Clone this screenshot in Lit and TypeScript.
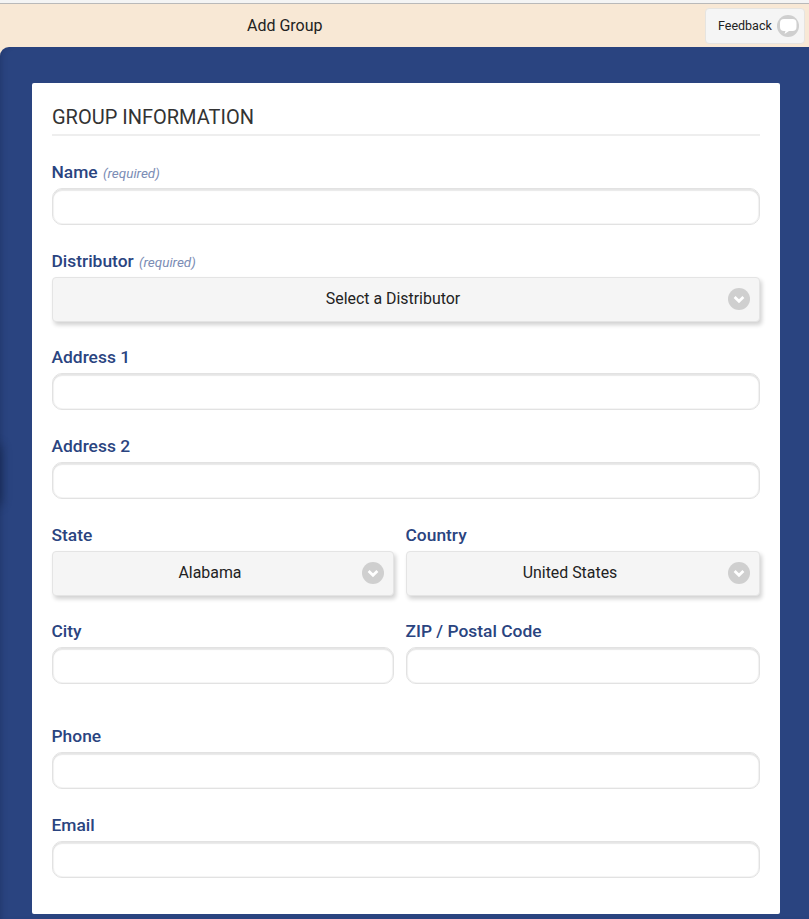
import { LitElement, html, css } from "lit";
import { customElement } from "lit/decorators.js";

const chevron = html`<svg class="chev" width="22" height="22" viewBox="0 0 22 22" aria-hidden="true"><circle cx="11" cy="11" r="11" fill="#cfcfcf"/><path d="M6.6 9 11 13.200l4.400-4.200" fill="none" stroke="#fff" stroke-width="2.800"/></svg>`;

@customElement("app-root")
export class AppRoot extends LitElement {
  static styles = css`
    :host { display: block; height: 919px; overflow: hidden; background: #f8e8d5; font-family: Roboto, "Liberation Sans", sans-serif; color: #222; }
    .topline { height: 3px; background: #f4f4f4; border-bottom: 1px solid #b9b9b9; }
    .header { height: 43px; display: flex; align-items: center; position: relative; padding-right: 4px; box-sizing: border-box; justify-content: flex-end; }
    .title { position: absolute; left: 247px; top: 12px; font-size: 16px; line-height: 20px; color: #222; }
    .feedback { width: 100px; height: 36px; box-sizing: border-box; border: 1px solid #e6e4e0; border-radius: 4px; background: #f5f5f5; display: flex; align-items: center; padding-left: 12px; gap: 5px; font-size: 12.5px; color: #222; }
    .panel { position: relative; height: 872px; background: #2a4480; border-radius: 9px 0 0 0; padding: 36px 29px 0 32px; box-sizing: border-box; box-shadow: inset 5px 0 6px -4px rgba(15,25,60,.3); overflow: hidden; }
    .handle { position: absolute; left: -8px; top: 398px; width: 8px; height: 60px; background: #0c1a3c; opacity: .8; filter: blur(6px); border-radius: 4px; }
    .card { background: #fff; height: 831px; border-radius: 2px; padding: 20px 20px 0; box-sizing: border-box; }
    h2 { margin: 0 0 26px; height: 33px; box-sizing: border-box; border-bottom: 2px solid #eee; font-weight: 400; font-size: 20px; line-height: 29px; color: #333; }
    .field { margin-bottom: 26px; min-width: 0; }
    .tight { margin-bottom: 25px; }
    label { display: block; height: 20px; margin-bottom: 6px; margin-left: -0.5px; font-size: 17.4px; line-height: 20px; font-weight: 500; color: #2a4480; white-space: nowrap; }
    em { font-size: 13.5px; font-weight: 400; color: #7b8db5; margin-left: 1px; }
    .row { display: grid; grid-template-columns: 342px 354px; gap: 12px; }
    .input { height: 37px; box-sizing: border-box; border: 1px solid #e2e2e2; border-radius: 10px; background: #fff; box-shadow: inset 0 2px 1px rgba(0,0,0,.09), inset 1px 0 1px rgba(0,0,0,.05), inset -1px 0 1px rgba(0,0,0,.05), inset 0 -1px 0 rgba(0,0,0,.03); }
    .select { height: 45px; box-sizing: border-box; border: 1px solid #e4e4e4; border-radius: 4px; background: #f5f5f5; box-shadow: 2px 3px 4px rgba(0,0,0,.18); display: flex; align-items: center; justify-content: center; position: relative; font-size: 15.9px; color: #222; padding: 0 26px 2px 0; }
    .chev { position: absolute; right: 9px; top: 10px; }
    .far { margin-bottom: 42px; }
    .bubble { flex: none; }
  `;

  private field(name: string, req = false, cls = "") {
    return html`<div class="field ${cls}"><label>${name}${req ? html` <em>(required)</em>` : ""}</label><div class="input"></div></div>`;
  }
  private select(name: string, value: string, req = false) {
    return html`<div class="field tight"><label>${name}${req ? html` <em>(required)</em>` : ""}</label><div class="select">${value}${chevron}</div></div>`;
  }

  render() {
    return html`
      <div class="topline"></div>
      <div class="header">
        <div class="title">Add Group</div>
        <div class="feedback">Feedback
          <svg class="bubble" width="22" height="22" viewBox="0 0 22 22" aria-hidden="true"><circle cx="11" cy="11" r="11" fill="#cfcfcf"/><path d="M7 4h8.500a4 4 0 0 1 4 4v4a4 4 0 0 1-4 4H12l-4.500 3 1-3H7a4 4 0 0 1-4-4V8a4 4 0 0 1 4-4z" fill="#fff"/></svg>
        </div>
      </div>
      <div class="panel">
        <div class="handle"></div>
        <div class="card">
          <h2>GROUP INFORMATION</h2>
          ${this.field("Name", true)}
          ${this.select("Distributor", "Select a Distributor", true)}
          ${this.field("Address 1")}
          ${this.field("Address 2")}
          <div class="row">
            ${this.select("State", "Alabama")}
            ${this.select("Country", "United States")}
          </div>
          <div class="row">
            ${this.field("City", false, "far")}
            ${this.field("ZIP / Postal Code", false, "far")}
          </div>
          ${this.field("Phone")}
          ${this.field("Email")}
        </div>
      </div>
    `;
  }
}
